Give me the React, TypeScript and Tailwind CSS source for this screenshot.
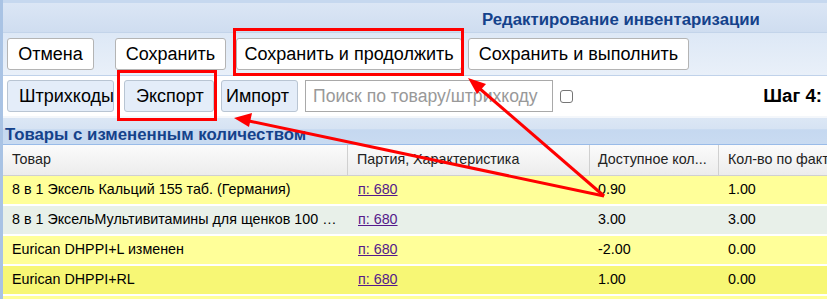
const rows = [
  { name: '8 в 1 Эксель Кальций 155 таб. (Германия)', lot: 'п: 680', avail: '0.90', fact: '1.00', bg: 'bg-[#ffff99]' },
  { name: '8 в 1 ЭксельМультивитамины для щенков 100 таб.', lot: 'п: 680', avail: '3.00', fact: '3.00', bg: 'bg-[#e8f0e9]' },
  { name: 'Eurican DHPPI+L изменен', lot: 'п: 680', avail: '-2.00', fact: '0.00', bg: 'bg-[#ffff99]' },
  { name: 'Eurican DHPPI+RL', lot: 'п: 680', avail: '1.00', fact: '0.00', bg: 'bg-[#f7f775]' },
];

const Btn = ({ children, className = '' }: { children: React.ReactNode; className?: string }) => (
  <button className={`h-[32px] shrink-0 rounded-[3px] border border-[#b4b4b4] bg-white text-[18px] leading-none text-black whitespace-nowrap ${className}`}>
    {children}
  </button>
);

const ToolBtn = ({ children, className = '' }: { children: React.ReactNode; className?: string }) => (
  <button className={`h-[32px] shrink-0 rounded-[3px] border border-[#b9c5d3] bg-[#e4edf9] text-[18px] leading-none text-black whitespace-nowrap text-left ${className}`}>
    {children}
  </button>
);

export default function App() {
  return (
    <div className="relative w-[827px] h-[299px] overflow-hidden bg-white font-['Liberation_Sans',Arial,sans-serif]">
      <div className="border-l-[3px] border-[#a9c3e4] h-full">
        {/* title bar */}
        <div className="h-[3px] bg-[#c6d8ef]" />
        <div className="h-[30px] bg-gradient-to-b from-[#dbe6f5] to-[#cfddf0] border-b border-[#c3d4ea] pl-[479px] pt-[5px] whitespace-nowrap">
          <span className="text-[16.8px] leading-[19px] font-bold text-[#15428b]">Редактирование инвентаризации</span>
        </div>

        {/* toolbar 1 */}
        <div className="h-[42px] flex items-center pl-[4px] bg-gradient-to-b from-[#dde8f6] to-[#e9f0f9]">
          <Btn className="w-[87px]">Отмена</Btn>
          <Btn className="ml-[21px] w-[111px]">Сохранить</Btn>
          <Btn className="ml-[10px] w-[226px]">Сохранить и продолжить</Btn>
          <Btn className="ml-[6px] w-[221px]">Сохранить и выполнить</Btn>
        </div>

        {/* toolbar 2 */}
        <div className="h-[41px] flex items-center pl-[4px] bg-white border-t border-[#c0d2ea]">
          <ToolBtn className="w-[107px] pl-[11px]">Штрихкоды</ToolBtn>
          <ToolBtn className="ml-[10px] w-[90px] pl-[11px]">Экспорт</ToolBtn>
          <ToolBtn className="ml-[7px] w-[77px] pl-[4px]">Импорт</ToolBtn>
          <div className="ml-[7px] w-[248px] h-[32px] shrink-0 border border-[#a9a9a9] flex items-center pl-[7px] text-[17.6px] text-[#999] whitespace-nowrap overflow-hidden">
            Поиск по товару/штрихкоду
          </div>
          <span className="ml-[7px] w-[13px] h-[13px] shrink-0 rounded-[3px] border border-[#767676] bg-white" />
          <span className="ml-auto mr-[5px] text-[18.7px] font-bold text-black whitespace-nowrap">Шаг 4:</span>
        </div>

        {/* section header */}
        <div className="h-[2px] bg-[#f4f7fb]" />
        <div className="h-[27px] border-b border-[#99bbe8] bg-[linear-gradient(to_bottom,#dce7f5_0%,#d6e3f3_42%,#c5d8f0_45%,#c9dbf1_100%)] pl-[2px] pt-[5px] whitespace-nowrap">
          <span className="text-[16.8px] leading-[19px] font-bold text-[#15428b]">Товары с измененным количеством</span>
        </div>

        {/* table header */}
        <div className="h-[31px] flex bg-gradient-to-b from-[#fbfbfb] to-[#ececec] border-b border-[#d0d0d0] text-[14.3px] text-[#222]">
          <div className="w-[345px] shrink-0 flex items-center pl-[9px] border-r border-[#d0d0d0]">Товар</div>
          <div className="w-[242px] shrink-0 flex items-center pl-[9px] border-r border-[#d0d0d0] whitespace-nowrap">Партия, Характеристика</div>
          <div className="w-[129px] shrink-0 flex items-center pl-[8px] border-r border-[#d0d0d0] whitespace-nowrap">Доступное кол...</div>
          <div className="flex-1 flex items-center pl-[9px] whitespace-nowrap overflow-hidden">Кол-во по факту</div>
        </div>

        {/* rows */}
        {rows.map((r, i) => (
          <div key={i} className={`h-[30px] flex border-b-2 border-white text-[14.3px] text-black ${r.bg}`}>
            <div className="w-[345px] shrink-0 flex items-center pl-[9px] pr-[10px] min-w-0">
              <span className="truncate">{r.name}</span>
            </div>
            <div className="w-[242px] shrink-0 flex items-center pl-[10px]">
              <a className="underline text-[#551a8b] cursor-pointer">{r.lot}</a>
            </div>
            <div className="w-[129px] shrink-0 flex items-center pl-[8px]">{r.avail}</div>
            <div className="flex-1 flex items-center pl-[9px]">{r.fact}</div>
          </div>
        ))}
        <div className="h-[30px] bg-[#ffff99]" />
      </div>

      {/* red annotations */}
      <svg className="absolute inset-0 pointer-events-none" width="827" height="299" viewBox="0 0 827 299">
        <rect x="234.5" y="29.5" width="228" height="45" fill="none" stroke="#ff0000" strokeWidth="3" />
        <rect x="118.5" y="71.5" width="97" height="48" fill="none" stroke="#ff0000" strokeWidth="3" />
        <line x1="604" y1="196" x2="479" y2="88" stroke="#ff0000" strokeWidth="3" />
        <polygon points="468,78 486,84 477,94" fill="#ff0000" />
        <line x1="604" y1="196" x2="249" y2="121" stroke="#ff0000" strokeWidth="3" />
        <polygon points="234,118 252,113 249,127" fill="#ff0000" />
      </svg>
    </div>
  );
}
